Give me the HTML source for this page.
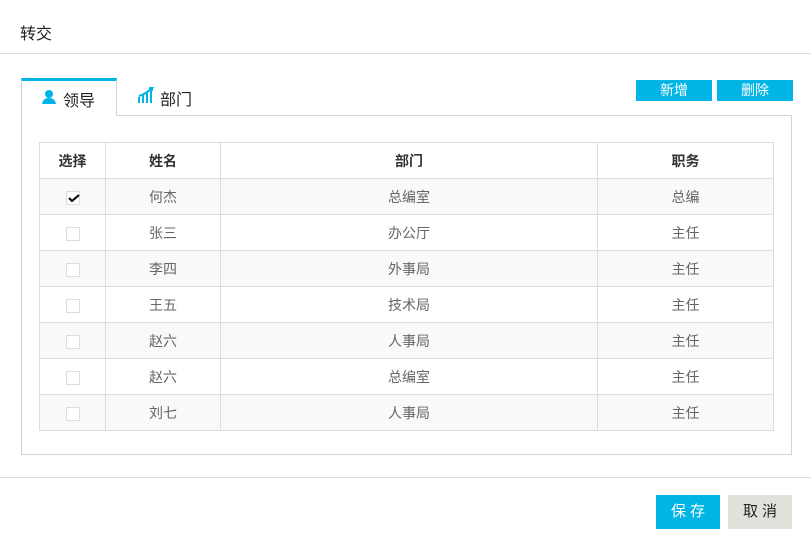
<!DOCTYPE html>
<html><head><meta charset="utf-8"><style>
*{margin:0;padding:0;box-sizing:border-box}
body{width:811px;height:548px;background:#fff;font-family:"Liberation Sans","Noto Sans CJK SC",sans-serif;position:relative;overflow:hidden;color:#333}
.a{position:absolute}
.title{left:20px;top:20px;font-size:16px;color:#222}
.hl{left:0;width:811px;height:1px;background:#ddd}
.panel{left:21px;top:115px;width:771px;height:340px;border:1px solid #d4d4d4}
.tab{left:21px;top:78px;width:96px;height:38px;background:#fff;border:1px solid #d4d4d4;border-top:3px solid #00b4e6;border-bottom:none;z-index:2}
.btn{background:#00b4e6;color:#fff;font-size:14px;text-align:center;line-height:21px;height:21px;width:76px}
table{position:absolute;left:39px;top:142px;border-collapse:collapse;font-size:14px}
td,th{border:1px solid #ddd;text-align:center;height:36px;padding:0}
th{font-weight:bold;color:#333;background:#fff}
td{color:#666}
tr.g td{background:#f9f9f9}
.cb{display:inline-block;width:14px;height:14px;border:1px solid #ddd;background:#fff;vertical-align:middle;position:relative}
</style></head><body>
<div class="a title">转交</div>
<div class="a hl" style="top:53px"></div>
<div class="a panel"></div>
<div class="a tab"><svg class="a" style="left:19px;top:8px" width="16" height="16" viewBox="0 0 16 16"><circle cx="8" cy="5" r="4" fill="#00b4e6"/><path d="M1 15 Q2 9 8 9 Q14 9 15 15Z" fill="#00b4e6"/></svg><span class="a" style="left:41px;top:6px;font-size:16px;color:#222">领导</span></div>
<svg class="a" style="left:138px;top:87px" width="18" height="17" viewBox="0 0 18 17"><path d="M1 16 V10 M5 16 V7 M9 16 V5 M13 16 V3 M1 9 Q8 7 14 1 L11 1 M14 1 V4" stroke="#00b4e6" stroke-width="2" fill="none"/></svg>
<span class="a" style="left:160px;top:86px;font-size:16px;color:#222">部门</span>
<div class="a btn" style="left:636px;top:80px">新增</div>
<div class="a btn" style="left:717px;top:80px">删除</div>
<table>
<tr><th style="width:66px">选择</th><th style="width:115px">姓名</th><th style="width:377px">部门</th><th style="width:176px">职务</th></tr>
<tr class="g"><td><span class="cb"><svg class="a" style="left:0;top:0" width="13" height="13"><path d="M2 6 L5 9 L12 3" stroke="#000" stroke-width="2" fill="none"/></svg></span></td><td>何杰</td><td>总编室</td><td>总编</td></tr>
<tr><td><span class="cb"></span></td><td>张三</td><td>办公厅</td><td>主任</td></tr>
<tr class="g"><td><span class="cb"></span></td><td>李四</td><td>外事局</td><td>主任</td></tr>
<tr><td><span class="cb"></span></td><td>王五</td><td>技术局</td><td>主任</td></tr>
<tr class="g"><td><span class="cb"></span></td><td>赵六</td><td>人事局</td><td>主任</td></tr>
<tr><td style="height:35px"><span class="cb"></span></td><td>赵六</td><td>总编室</td><td>主任</td></tr>
<tr class="g"><td><span class="cb"></span></td><td>刘七</td><td>人事局</td><td>主任</td></tr>
</table>
<div class="a hl" style="top:477px"></div>
<div class="a" style="left:656px;top:495px;width:64px;height:34px;background:#00b4e6;color:#fff;font-size:15px;text-align:center;line-height:34px;letter-spacing:4px;padding-left:4px">保存</div>
<div class="a" style="left:728px;top:495px;width:64px;height:34px;background:#e1e1dc;color:#222;font-size:15px;text-align:center;line-height:34px;letter-spacing:4px;padding-left:4px">取消</div>
</body></html>
